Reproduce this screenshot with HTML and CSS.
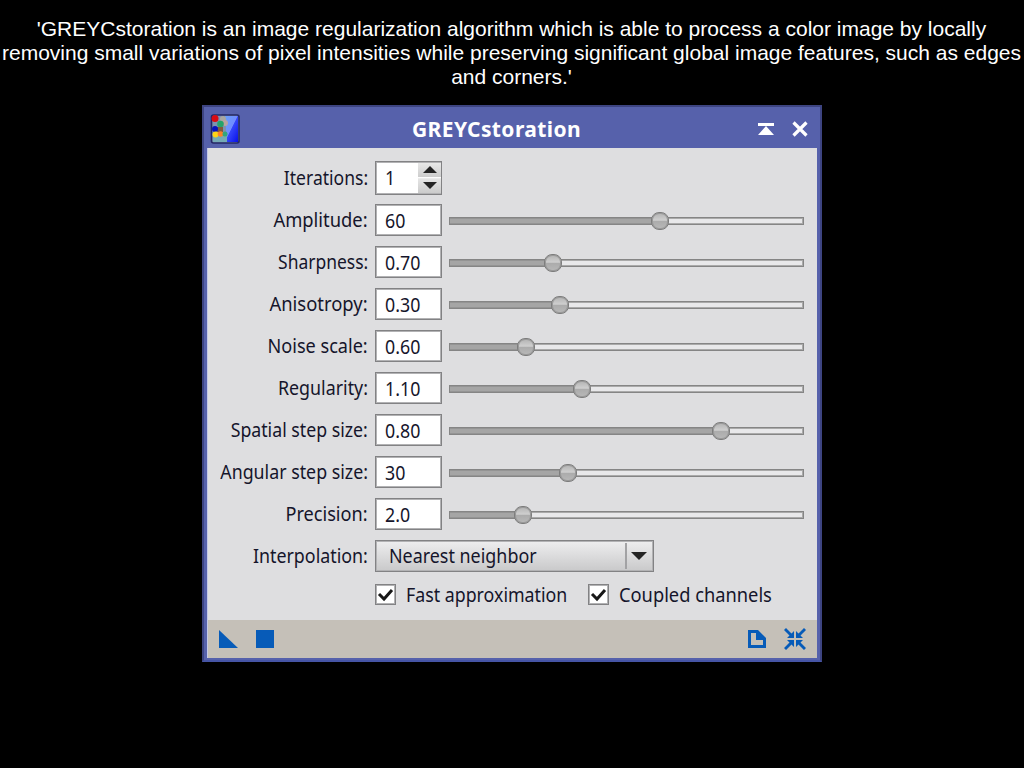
FILE: index.html
```html
<!DOCTYPE html>
<html lang="en">
<head>
<meta charset="utf-8">
<title>GREYCstoration</title>
<link rel="stylesheet" href="styles.css">
</head>
<body>
<p class="intro"><span>'GREYCstoration is an image regularization algorithm which is able to process a color image by locally</span><span>removing small variations of pixel intensities while preserving significant global image features, such as edges</span><span>and corners.'</span></p>
<main class="dialog">
  <header class="titlebar">
    <svg class="app-icon" width="30" height="30" viewBox="0 0 30 30">
      <defs><linearGradient id="blue" x1="0" y1="0" x2="1" y2="1"><stop offset="0" stop-color="#68a0f8"/><stop offset=".48" stop-color="#718cff"/><stop offset=".5" stop-color="#3647fa"/><stop offset="1" stop-color="#0710e8"/></linearGradient></defs>
      <rect x="1.500" y="1" width="27.500" height="28" rx="2" fill="#7d91b0" stroke="#242866" stroke-width="1.600"/>
      <path d="M15 2h13v26H17z" fill="url(#blue)"/>
      <path d="M3 22h14v6H3z" fill="#75aab5"/>
      <circle cx="13" cy="5" r="3" fill="#a8a6a0"/><circle cx="15" cy="9" r="3" fill="#b9a4a1"/>
      <circle cx="10.500" cy="10" r="3.300" fill="#24a36a"/><path d="M7 13h6v5H7z" fill="#805a3c"/>
      <circle cx="5" cy="4.500" r="3.500" fill="#d90b13"/><circle cx="5" cy="15" r="3" fill="#0710bc"/>
      <circle cx="5.500" cy="20.500" r="3" fill="#ffd316"/><circle cx="10.500" cy="20" r="2.800" fill="#ff8027"/><circle cx="15" cy="20" r="2.500" fill="#32a77b"/>
    </svg>
    <h1>GREYCstoration</h1>
    <svg class="shade" width="16" height="12" viewBox="0 0 16 12"><path d="M0 0h16v3H0zM8 3l8 9H0z" fill="#fff"/></svg>
    <svg class="close" width="16" height="16" viewBox="0 0 16 16"><path d="M1.500 1.500l13 13M14.500 1.500l-13 13" stroke="#fff" stroke-width="3.200"/></svg>
  </header>
  <section class="form">
    <div class="row"><label><span style="--fit:.877">Iterations:</span></label><div class="field spin"><b>1</b><i><svg width="23" height="15"><path d="M5 10l7-7 7 7z"/></svg><svg width="23" height="15"><path d="M5 4h14l-7 7z"/></svg></i></div></div>
    <div class="row"><label><span style="--fit:.918">Amplitude:</span></label><div class="field"><b>60</b></div><div class="slider"><i style="width:210px"></i></div></div>
    <div class="row"><label><span style="--fit:.873">Sharpness:</span></label><div class="field"><b>0.70</b></div><div class="slider"><i style="width:103px"></i></div></div>
    <div class="row"><label><span style="--fit:.921">Anisotropy:</span></label><div class="field"><b>0.30</b></div><div class="slider"><i style="width:110px"></i></div></div>
    <div class="row"><label><span style="--fit:.905">Noise scale:</span></label><div class="field"><b>0.60</b></div><div class="slider"><i style="width:76px"></i></div></div>
    <div class="row"><label><span style="--fit:.892">Regularity:</span></label><div class="field"><b>1.10</b></div><div class="slider"><i style="width:132px"></i></div></div>
    <div class="row"><label><span style="--fit:.886">Spatial step size:</span></label><div class="field"><b>0.80</b></div><div class="slider"><i style="width:271px"></i></div></div>
    <div class="row"><label><span style="--fit:.89">Angular step size:</span></label><div class="field"><b>30</b></div><div class="slider"><i style="width:118px"></i></div></div>
    <div class="row"><label><span style="--fit:.906">Precision:</span></label><div class="field"><b>2.0</b></div><div class="slider"><i style="width:73px"></i></div></div>
    <div class="row"><label><span style="--fit:.892">Interpolation:</span></label><div class="combo"><b style="--fit:.895">Nearest neighbor</b><svg width="28" height="26"><path d="M4 9h16l-8 8z"/></svg></div></div>
    <div class="checks">
      <div class="check"><i><svg width="19" height="19"><path d="M3 9l5 5 8-9"/></svg></i><b style="--fit:.889">Fast approximation</b></div>
      <div class="check"><i><svg width="19" height="19"><path d="M3 9l5 5 8-9"/></svg></i><b style="--fit:.914">Coupled channels</b></div>
    </div>
  </section>
  <footer class="tools">
    <svg width="19" height="18"><path d="M0 0l19 18H0z"/></svg>
    <svg width="18" height="18"><path d="M0 0h18v18H0z"/></svg>
    <svg class="doc" width="18" height="18"><path fill-rule="evenodd" d="M0 0h10l8 8v10H0zM3 3v12h12v-5H8V3z"/></svg>
    <svg width="22" height="22"><path d="M10 3v7H3l2.500-2.500L0 2l2-2 5.500 5.500zM12 3v7h7l-2.500-2.500L22 2l-2-2-5.500 5.500zM10 19v-7H3l2.500 2.500L0 20l2 2 5.500-5.500zM12 19v-7h7l-2.500 2.500L22 20l-2 2-5.500-5.500z"/></svg>
  </footer>
</main>
</body>
</html>
```

FILE: styles.css
```css
* { box-sizing: border-box; }
body { margin: 0; background: #000; height: 768px; overflow: hidden; }
svg { display: block; flex: none; }
b, i { font-weight: inherit; font-style: normal; }
.intro { margin: 0; padding: 17px 1px 0 0; height: 105px; color: #fff; font: 21px/24px "Liberation Sans", Arial, sans-serif; text-align: center; }
.intro span { display: block; white-space: nowrap; }
.dialog { width: 620px; height: 557px; margin-left: 202px; border: 2px solid #3d4481; border-bottom-color: #4655a6; background: #5661ab; display: flex; flex-direction: column; padding: 0 3px 2px; font: 20px/24px "Noto Sans", sans-serif; color: #15152b; }
.titlebar { height: 41px; flex: none; display: flex; align-items: center; padding: 3px 9px 0 3px; color: #fff; }
.titlebar h1 { flex: 1; text-align: center; margin: 0; padding-right: 5px; font: bold 21px/26px "Noto Sans", sans-serif; letter-spacing: .4px; }
.shade { margin-right: 18px; }
.form { height: 472px; flex: none; background: #dedee0; border-left: 1px solid #c5c9e8; padding-top: 9px; }
.row { height: 42px; display: flex; align-items: center; }
.row label { width: 160px; margin-right: 7px; display: flex; justify-content: flex-end; white-space: nowrap; }
.row label span { display: block; transform: scaleX(var(--fit)); transform-origin: right; }
.combo b, .check b { display: block; transform: scaleX(var(--fit)); transform-origin: left; white-space: nowrap; }
.field, .combo, .check i { border: 1px solid #828284; box-shadow: inset 0 0 0 1px #b2b2b4; }
.field { width: 67px; height: 32px; background: #fff; padding-left: 9px; display: flex; align-items: center; }
.field b { transform: scaleX(.89); transform-origin: left; padding-top: 1px; }
.spin { height: 34px; justify-content: space-between; margin-top: -1px; }
.spin b { padding-top: 0; }
.spin i { background: linear-gradient(#e8e8e8, #cdcdcd 47%, #fff 48%, #e5e5e5 53%, #cbcbcb); width: 23px; }
.spin path, .combo path { fill: #242424; }
.slider { margin: 2px 0 0 7px; width: 355px; height: 8px; border: 1px solid #858585; box-shadow: inset 0 0 0 1px #aaa; background: #e8e8ea; display: flex; align-items: center; }
.slider i { display: flex; align-items: center; justify-content: flex-end; height: 6px; background: #a5a5a5; border-top: 1px solid #949494; border-bottom: 1px solid #949494; }
.slider i::after { content: ""; box-sizing: border-box; flex: none; width: 18px; height: 18px; margin-right: -9px; border: 1px solid #7d7d7d; box-shadow: inset 0 0 0 1px #999; border-radius: 8px; background: linear-gradient(#b2b2b2, #cfcfcf 45%, #acacac 52%, #b8b8b8); }
.combo { width: 279px; height: 32px; background: linear-gradient(#eeeeef, #c9c9ca); display: flex; align-items: center; justify-content: space-between; padding-left: 13px; }
.combo svg { border-left: 2px solid #a2a2a4; }
.checks { display: flex; padding-left: 167px; height: 35px; align-items: center; }
.check { display: flex; align-items: center; width: 213px; white-space: nowrap; }
.check i { width: 21px; height: 21px; background: #fff; margin-right: 10px; flex: none; }
.check path { fill: none; stroke: #171717; stroke-width: 3; }
.tools { flex: 1; background: #c5c0b8; border-left: 1px solid #c5c9e8; display: flex; align-items: center; padding: 0 11px 0 11px; gap: 18px; }
.tools svg { fill: #075bb8; }
.tools .doc { margin-left: auto; }
```
